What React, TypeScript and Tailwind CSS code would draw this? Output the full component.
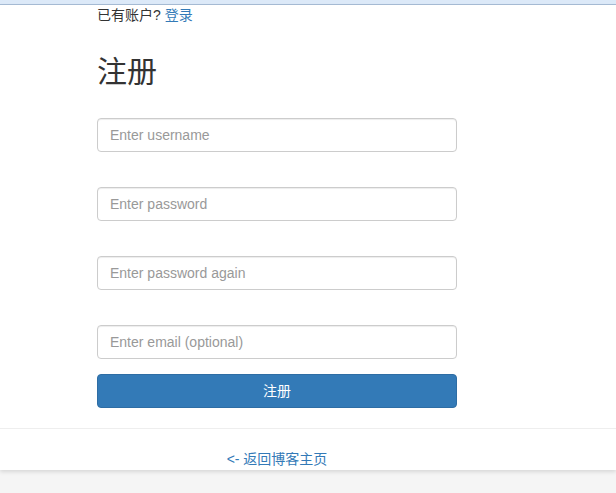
import React from "react";

const font = { fontFamily: '"Liberation Sans", "Noto Sans CJK SC", sans-serif' };

const fields = [
    { type: "text", placeholder: "Enter username" },
    { type: "password", placeholder: "Enter password" },
    { type: "password", placeholder: "Enter password again" },
    { type: "email", placeholder: "Enter email (optional)" },
];

export default function App() {
    return (
        <div className="min-h-screen bg-[#f5f5f5] text-[#333] text-[14px] font-['Liberation_Sans','Noto_Sans_CJK_SC',sans-serif]">
            {/* top strip */}
            <div className="h-[5px] bg-[#dce9f8] border-b border-[#a7bdd6]" />

            <div className="bg-white shadow-[0_2px_4px_rgba(0,0,0,0.12)]">
                <div className="w-[360px] ml-[97px]">
                    <p className="leading-[20px]">
                        已有账户?{" "}
                        <a href="#" className="text-[#337ab7]">
                            登录
                        </a>
                    </p>

                    <h2 className="mt-[30px] text-[30px] leading-[33px] font-normal">注册</h2>

                    <form className="mt-[30px] flex flex-col gap-[35px]">
                        {fields.map((f) => (
                            <input
                                key={f.placeholder}
                                type={f.type}
                                placeholder={f.placeholder}
                                style={font}
                                className="h-[34px] w-full rounded-[4px] border border-[#ccc] px-3 text-[14px] text-[#555] placeholder:text-[#999] shadow-[inset_0_1px_1px_rgba(0,0,0,0.075)] outline-none"
                            />
                        ))}
                    </form>
                    <button
                        style={font}
                        className="mt-[15px] h-[34px] w-full rounded-[4px] border border-[#2e6da4] bg-[#337ab7] text-white text-[14px]"
                    >
                        注册
                    </button>
                </div>

                <hr className="mt-[20px] border-t border-[#eee]" />

                <div className="w-[360px] ml-[97px] pt-[20px] pb-[1px] text-center leading-[20px]">
                    <a href="#" className="text-[#337ab7]">
                        &lt;- 返回博客主页
                    </a>
                </div>
            </div>
        </div>
    );
}
